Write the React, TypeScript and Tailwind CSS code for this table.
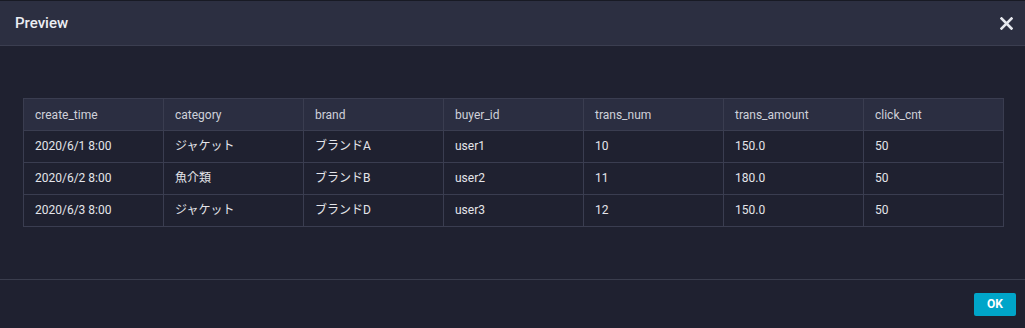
const columns = ["create_time", "category", "brand", "buyer_id", "trans_num", "trans_amount", "click_cnt"];

const rows = [
  ["2020/6/1 8:00", "ジャケット", "ブランドA", "user1", "10", "150.0", "50"],
  ["2020/6/2 8:00", "魚介類", "ブランドB", "user2", "11", "180.0", "50"],
  ["2020/6/3 8:00", "ジャケット", "ブランドD", "user3", "12", "150.0", "50"],
];

export default function App() {
  return (
    <div
      className="w-[1025px] h-[328px] flex flex-col bg-[#1f2130] border-t border-[#181a24] overflow-hidden"
      style={{ fontFamily: 'Roboto, "Noto Sans CJK JP", sans-serif' }}
    >
      {/* header */}
      <div className="h-[45px] flex items-center justify-between pl-[15px] pr-[11px] bg-[#2c2f41] border-b border-[#3b3e50]">
        <span className="text-[15px] font-medium text-[#eceef3]">Preview</span>
        <button className="w-[15px] h-[15px] flex items-center justify-center text-[#e6e8ee]">
          <svg width="13" height="13" viewBox="0 0 13 13">
            <path d="M1.5 1.5 L11.5 11.5 M11.5 1.5 L1.5 11.5" stroke="currentColor" strokeWidth="2.6" strokeLinecap="square" />
          </svg>
        </button>
      </div>

      {/* body */}
      <div className="flex-1 pt-[52px] pl-[23px] pr-[21px]">
        <table className="w-[981px] border-collapse table-fixed text-[12px]">
          <thead>
            <tr className="bg-[#2b2e41]">
              {columns.map((c) => (
                <th
                  key={c}
                  className="h-[32px] px-[11px] text-left font-normal text-[#cfd1da] border border-[#3a3d50]"
                >
                  {c}
                </th>
              ))}
            </tr>
          </thead>
          <tbody>
            {rows.map((r, i) => (
              <tr key={i} className="bg-[#1f2130]">
                {r.map((v, j) => (
                  <td key={j} className="h-[32px] px-[11px] pb-px text-[#e4e5ea] border border-[#3a3d50]">
                    {v}
                  </td>
                ))}
              </tr>
            ))}
          </tbody>
        </table>
      </div>

      {/* footer */}
      <div className="h-[49px] flex items-center justify-end pr-[9px] border-t border-[#3a3d4d]">
        <button className="w-[42px] h-[23px] rounded-[2px] bg-[#00a5c9] text-white text-[12px] font-bold">
          OK
        </button>
      </div>
    </div>
  );
}
